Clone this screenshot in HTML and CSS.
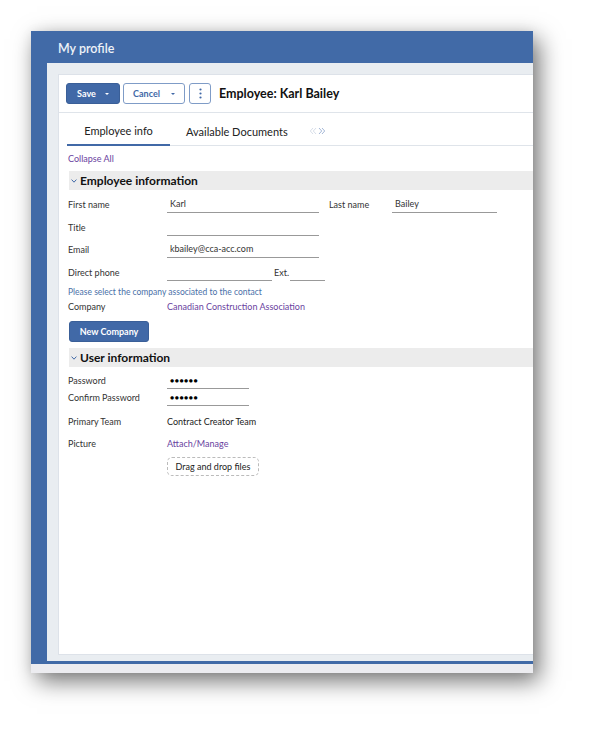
FILE: index.html
```html
<!DOCTYPE html>
<html>
<head>
<meta charset="utf-8">
<link rel="stylesheet" href="styles.css">
</head>
<body>
<div class="page">
  <div class="window">
    <div class="frame">
      <div class="titlebar">My profile</div>
      <div class="content">
        <div class="card">
          <div class="toolbar">
            <button class="btn btn-primary">Save <span class="caret"></span></button>
            <button class="btn btn-outline">Cancel <span class="caret"></span></button>
            <button class="btn btn-outline btn-kebab"><svg width="3" height="11" viewBox="0 0 3 11"><circle cx="1.5" cy="1.5" r="1.1" fill="#4169a7"/><circle cx="1.5" cy="5.5" r="1.1" fill="#4169a7"/><circle cx="1.5" cy="9.5" r="1.1" fill="#4169a7"/></svg></button>
            <h1 class="record-title">Employee: Karl Bailey</h1>
          </div>
          <div class="tabs">
            <div class="tab active">Employee info</div>
            <div class="tab">Available Documents</div>
            <div class="tab-nav"><svg width="17" height="8" viewBox="0 0 17 8"><path d="M4 1 L1.3 4 L4 7 M7 1 L4.3 4 L7 7" fill="none" stroke="#d2dae7" stroke-width="0.9"/><path d="M10 1 L12.7 4 L10 7 M13 1 L15.7 4 L13 7" fill="none" stroke="#9bb0d2" stroke-width="0.9"/></svg></div>
          </div>
          <div class="form">
            <a class="link collapse">Collapse All</a>
            <div class="section-head"><svg class="chev" width="6" height="4" viewBox="0 0 6 4"><path d="M0.6 0.6 L3 3.2 L5.4 0.6" fill="none" stroke="#4169a7" stroke-width="1"/></svg>Employee information</div>
            <div class="row row-first">
              <span class="label">First name</span>
              <span class="field w152">Karl</span>
              <span class="label label2">Last name</span>
              <span class="field w105">Bailey</span>
            </div>
            <div class="row">
              <span class="label">Title</span>
              <span class="field w152"></span>
            </div>
            <div class="row">
              <span class="label">Email</span>
              <span class="field w152">kbailey@cca-acc.com</span>
            </div>
            <div class="row">
              <span class="label">Direct phone</span>
              <span class="field w105"></span>
              <span class="ext">Ext.</span>
              <span class="field w35"></span>
            </div>
            <div class="hint">Please select the company associated to the contact</div>
            <div class="row row-tight">
              <span class="label">Company</span>
              <a class="link">Canadian Construction Association</a>
            </div>
            <button class="btn btn-primary btn-new">New Company</button>
            <div class="section-head sec2"><svg class="chev" width="6" height="4" viewBox="0 0 6 4"><path d="M0.6 0.6 L3 3.2 L5.4 0.6" fill="none" stroke="#4169a7" stroke-width="1"/></svg>User information</div>
            <div class="row row-pw row-pw-first">
              <span class="label">Password</span>
              <span class="field w82 dots">●●●●●●</span>
            </div>
            <div class="row row-pw">
              <span class="label">Confirm Password</span>
              <span class="field w82 dots">●●●●●●</span>
            </div>
            <div class="row row-plain row-plain-first">
              <span class="label">Primary Team</span>
              <span class="value">Contract Creator Team</span>
            </div>
            <div class="row row-plain">
              <span class="label">Picture</span>
              <a class="link">Attach/Manage</a>
            </div>
            <div class="dropzone">Drag and drop files</div>
          </div>
        </div>
      </div>
    </div>
  </div>
</div>
</body>
</html>
```
FILE: styles.css
```css
* { box-sizing: border-box; }
html, body { margin: 0; padding: 0; background: #fff; }
body { font-family: Lato, "Open Sans", sans-serif; color: #222; }
.page { padding: 31px 0 0 31px; width: 595px; height: 735px; overflow: hidden; }
.window {
  width: 502px; height: 642px; background: #ececf0;
  box-shadow: 6px 8px 22px rgba(0,0,0,0.55), 0 0 10px rgba(0,0,0,0.06);
  display: flex; flex-direction: column;
}
.frame {
  background: #416aa7; height: 633px; padding: 0 0 3px 16px;
  display: flex; flex-direction: column;
}
.titlebar {
  height: 32px; margin-left: -16px; padding: 3px 0 0 27px;
  color: #eef2f8; font-size: 12.5px; font-weight: 600; line-height: 29px;
}
.content {
  flex: 1; background: #e9edf1; padding: 11px 0 6px 11px;
  display: flex; flex-direction: column;
}
.card {
  flex: 1; background: #fff; border: 1px solid #dde2e9; border-right: none;
  display: flex; flex-direction: column;
}
.toolbar {
  height: 38px; border-bottom: 1px solid #dfe4ea;
  display: flex; align-items: center; padding-left: 7px; gap: 3px;
}
.btn {
  font-family: Lato, sans-serif; font-size: 9px; font-weight: 700;
  height: 21px; border-radius: 3px; padding: 0; cursor: pointer;
  display: inline-flex; align-items: center; justify-content: center;
}
.btn-primary { background: #4169a7; color: #fff; border: 1px solid #3a5f98; }
.btn-outline { background: #fff; color: #4169a7; border: 1px solid #7f9cc7; }
.toolbar .btn-primary { width: 54px; gap: 9px; }
.toolbar .btn-outline { width: 62px; gap: 11px; }
.toolbar .btn-kebab { width: 22px; margin-left: 1px; }
.caret { width: 0; height: 0; border-left: 2.5px solid transparent; border-right: 2.5px solid transparent; border-top: 2.5px solid currentColor; margin-top: 1px; }
.record-title { margin: 0 0 0 5px; font-size: 12.5px; font-weight: 700; color: #111; }
.tabs {
  height: 33px; border-bottom: 1px solid #dfe4ea; margin-left: 8px;
  display: flex; align-items: stretch; font-size: 11px; color: #222;
}
.tab { display: flex; align-items: center; padding: 4px 16px 0; }
.tab.active { border-bottom: 2px solid #4169a7; margin-bottom: -1px; width: 103px; justify-content: center; }
.tab-nav { display: flex; align-items: center; padding: 4px 0 0 5px; }
.form { padding: 0 0 0 9px; font-size: 9px; color: #333; display: flex; flex-direction: column; }
.link { color: #6a3fa0; text-decoration: none; }
.collapse { display: block; margin-top: 7px; height: 18px; line-height: 12px; }
.section-head {
  height: 19px; background: #ececec; display: flex; align-items: center;
  font-size: 12px; font-weight: 700; color: #111; margin-left: 1px;
}
.chev { margin: 1px 3px 0 2px; flex: none; }
.row { display: flex; align-items: flex-end; height: 22.5px; }
.row-first { height: 23px; }
.label { width: 99px; flex: none; padding-bottom: 3px; }
.label2 { width: 63px; margin-left: 10px; }
.field {
  border-bottom: 1px solid #999; height: 15px; padding: 0 3px; flex: none;
  line-height: 11px;
}
.w152 { width: 152px; }
.w105 { width: 105px; }
.w35 { width: 35px; }
.w82 { width: 82px; }
.ext { width: 18px; padding: 0 0 3px 2px; }
.dots { font-size: 7px; letter-spacing: 0.5px; line-height: 13px; color: #000; }
.hint { color: #4a70a8; font-size: 8.5px; margin-top: 6px; height: 12px; }
.row-tight { height: 16px; align-items: center; }
.row-tight .label { padding-bottom: 0; }
.btn-new { width: 80px; height: 21px; margin-top: 6px; margin-left: 1px; }
.sec2 { margin-top: 6px; }
.row-pw { height: 17px; }
.row-pw-first { height: 22.5px; }
.row-plain { height: 22px; align-items: center; }
.row-plain-first { height: 26px; padding-top: 4px; }
.row-plain .label { padding-bottom: 0; }
.value { color: #222; }
.dropzone {
  margin: 3px 0 0 99px; width: 92px; height: 19px; border: 1px dashed #bbb;
  border-radius: 5px; display: flex; align-items: center; justify-content: center;
  color: #222; font-size: 9px;
}
```
